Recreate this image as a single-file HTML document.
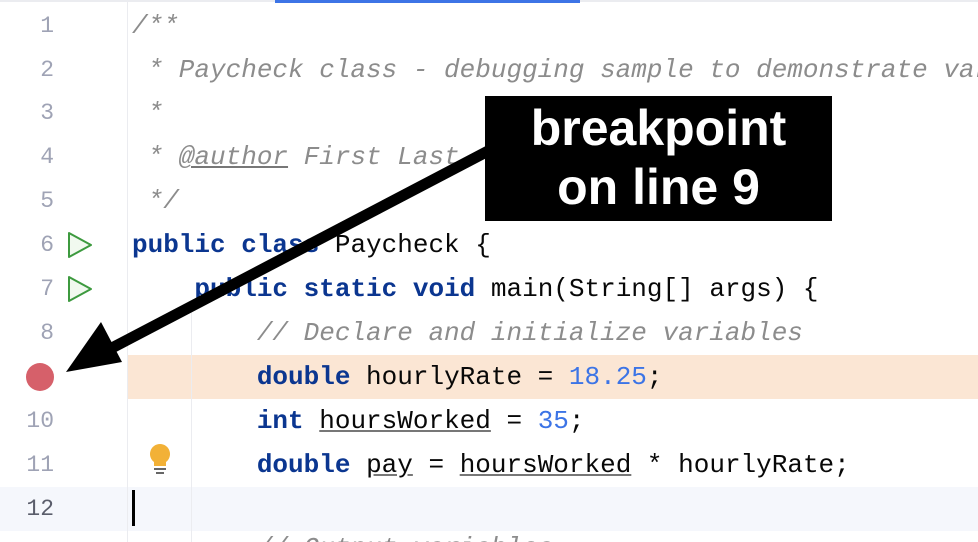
<!DOCTYPE html>
<html><head><meta charset="utf-8"><style>
html,body{margin:0;width:978px;height:542px;overflow:hidden}
body{background:#fff;position:relative;font-family:"Liberation Mono",monospace}
#wrap{position:absolute;left:0;top:0;width:978px;height:542px;overflow:hidden}
.ln{position:absolute;left:0;width:54px;text-align:right;font-size:23px;color:#9fa3b5;height:44px;line-height:44px}
.cd{position:absolute;left:132px;right:0;overflow:hidden;font-size:26px;height:44px;line-height:44px;white-space:pre;color:#080808}
.k{color:#0b3690;font-weight:bold}
.c{color:#8c8c8c;font-style:italic}
.n{color:#3c74e6}
.u{text-decoration:underline;text-decoration-color:#777}
</style></head><body><div id="wrap">
<div style="position:absolute;left:0;top:0;width:978px;height:2px;background:#ebecf0"></div>
<div style="position:absolute;left:275px;top:0;width:305px;height:3px;background:#3d74e6"></div>
<div style="position:absolute;left:0;top:487px;width:978px;height:44px;background:#f5f7fc"></div>
<div style="position:absolute;left:128px;top:355px;width:850px;height:44px;background:#fbe6d4"></div>
<div style="position:absolute;left:127px;top:0;width:1px;height:542px;background:#ebecf0"></div>
<div style="position:absolute;left:191px;top:311px;width:1px;height:231px;background:#ebecf0"></div>

<div class="ln" style="top:4px">1</div>
<div class="ln" style="top:48px">2</div>
<div class="ln" style="top:91px">3</div>
<div class="ln" style="top:135px">4</div>
<div class="ln" style="top:179px">5</div>
<div class="ln" style="top:223px">6</div>
<div class="ln" style="top:267px">7</div>
<div class="ln" style="top:311px">8</div>
<div class="ln" style="top:399px">10</div>
<div class="ln" style="top:443px">11</div>
<div class="ln" style="top:487px;color:#5a5d6b">12</div>

<svg style="position:absolute;left:0;top:0" width="978" height="542">
<circle cx="40" cy="377" r="14" fill="#d6606a"/>
<path d="M69 233 L91 245 L69 257 Z" fill="#f1f9ef" stroke="#3d9a3f" stroke-width="2" stroke-linejoin="round"/>
<path d="M69 277 L91 289 L69 301 Z" fill="#f1f9ef" stroke="#3d9a3f" stroke-width="2" stroke-linejoin="round"/>
<path d="M160 444a10 10 0 0 0-6 18v4h12v-4a10 10 0 0 0-6-18z" fill="#f2b137"/>
<rect x="154" y="468" width="12" height="2" fill="#666"/>
<rect x="156" y="472" width="8" height="2" fill="#666"/>
<rect x="132" y="490" width="3" height="36" fill="#000"/>
</svg>

<div class="cd c" style="top:4px">/**</div>
<div class="cd c" style="top:48px"> * Paycheck class - debugging sample to demonstrate variables</div>
<div class="cd c" style="top:91px"> *</div>
<div class="cd c" style="top:135px"> * <span class="u">@author</span> First Last</div>
<div class="cd c" style="top:179px"> */</div>
<div class="cd" style="top:223px"><span class="k">public class</span> Paycheck {</div>
<div class="cd" style="top:267px">    <span class="k">public static void</span> main(String[] args) {</div>
<div class="cd c" style="top:311px">        // Declare and initialize variables</div>
<div class="cd" style="top:355px">        <span class="k">double</span> hourlyRate = <span class="n">18.25</span>;</div>
<div class="cd" style="top:399px">        <span class="k">int</span> <span class="u">hoursWorked</span> = <span class="n">35</span>;</div>
<div class="cd" style="top:443px">        <span class="k">double</span> <span class="u">pay</span> = <span class="u">hoursWorked</span> * hourlyRate;</div>
<div class="cd c" style="top:526px;height:16px">        // Output variables</div>

<svg style="position:absolute;left:0;top:0" width="978" height="542">
<line x1="490" y1="150" x2="108" y2="350" stroke="#000" stroke-width="11"/>
<path d="M66 372 L101 322 L122 362 Z" fill="#000"/>
</svg>
<div style="position:absolute;left:485px;top:96px;width:347px;height:125px;background:#000;color:#fff;font-family:'Liberation Sans',sans-serif;font-weight:bold;font-size:50px;line-height:59px;text-align:center;padding-top:3px;box-sizing:border-box">breakpoint<br>on line 9</div>
</div></body></html>
